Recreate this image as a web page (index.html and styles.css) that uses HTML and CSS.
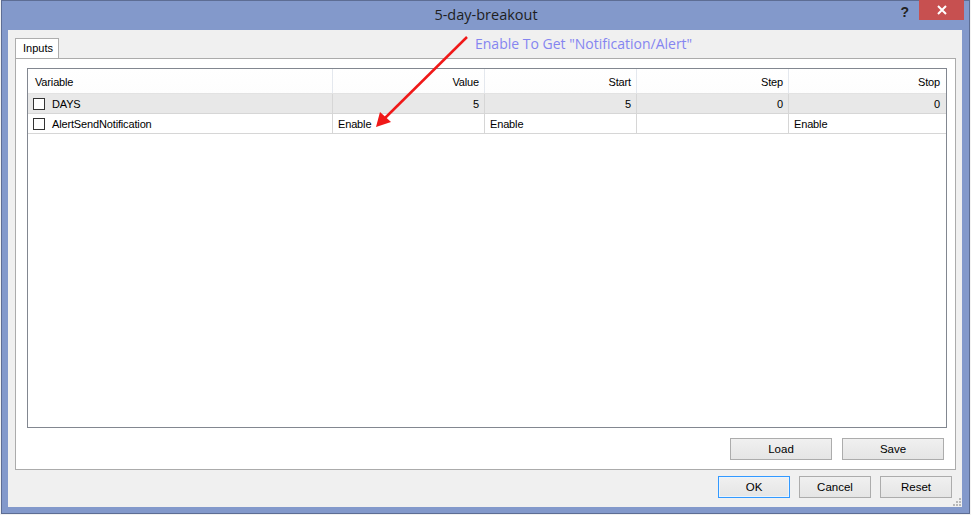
FILE: index.html
```html
<!DOCTYPE html>
<html>
<head>
<meta charset="utf-8">
<title>5-day-breakout</title>
<link rel="stylesheet" href="styles.css">
</head>
<body>
	<div class="window">
		<div class="titlebar">
			<span class="title">5-day-breakout</span>
			<div class="controls">
				<span class="help">?</span>
				<span class="close">
					<svg width="10" height="10" viewBox="0 0 10 10"><path d="M1 1L9 9M9 1L1 9" stroke="#fff" stroke-width="2"/></svg>
				</span>
			</div>
		</div>
		<div class="client">
			<div class="tabs">
				<div class="tab">Inputs</div>
			</div>
			<div class="panel">
				<div class="listview">
					<div class="row head">
						<div class="cell">Variable</div>
						<div class="cell num">Value</div>
						<div class="cell num">Start</div>
						<div class="cell num">Step</div>
						<div class="cell num">Stop</div>
					</div>
					<div class="row grey">
						<div class="cell"><span class="check"></span>DAYS</div>
						<div class="cell num">5</div>
						<div class="cell num">5</div>
						<div class="cell num">0</div>
						<div class="cell num">0</div>
					</div>
					<div class="row">
						<div class="cell"><span class="check"></span>AlertSendNotification</div>
						<div class="cell">Enable</div>
						<div class="cell">Enable</div>
						<div class="cell"></div>
						<div class="cell">Enable</div>
					</div>
				</div>
				<div class="panel-buttons">
					<button class="btn wide">Load</button>
					<button class="btn wide">Save</button>
				</div>
			</div>
			<div class="dialog-buttons">
				<button class="btn focus">OK</button>
				<button class="btn">Cancel</button>
				<button class="btn">Reset</button>
			</div>
			<svg class="grip" width="8" height="8" viewBox="0 0 8 8">
				<rect x="6" y="0" width="2" height="2" fill="#b8b8b8"/>
				<rect x="3" y="3" width="2" height="2" fill="#b8b8b8"/>
				<rect x="6" y="3" width="2" height="2" fill="#b8b8b8"/>
				<rect x="0" y="6" width="2" height="2" fill="#b8b8b8"/>
				<rect x="3" y="6" width="2" height="2" fill="#b8b8b8"/>
				<rect x="6" y="6" width="2" height="2" fill="#b8b8b8"/>
			</svg>
		</div>
	</div>

	<!-- annotation drawn on top of the screenshot -->
	<div class="note">Enable To Get "Notification/Alert"</div>
	<svg class="arrow" width="971" height="515" viewBox="0 0 971 515">
		<line x1="467" y1="37" x2="384" y2="119" stroke="#f01818" stroke-width="2.5"/>
		<path d="M376 127L380 112L391 122Z" fill="#f01818"/>
	</svg>
</body>
</html>
```

FILE: styles.css
```css
body {
	margin: 0;
	background: #f2f2f2;
	font-family: "Liberation Sans", Arial, sans-serif;
	font-size: 11px;
	color: #000;
	position: relative;
	width: 971px;
	height: 515px;
	overflow: hidden;
}

.window {
	margin-left: 1px;
	width: 969px;
	height: 514px;
	box-sizing: border-box;
	border: 1px solid #5d6d94;
	background: #8399cb;
	display: flex;
	flex-direction: column;
}

.titlebar {
	height: 29px;
	flex: none;
	display: flex;
	justify-content: center;
	position: relative;
}

.title {
	font-family: "Open Sans", sans-serif;
	font-size: 14.5px;
	color: #1e1e1e;
	line-height: 28px;
	margin-left: 1px;
}

.controls {
	position: absolute;
	right: 5px;
	top: -1px;
	display: flex;
	align-items: flex-start;
}

.help {
	font-family: "Liberation Sans", sans-serif;
	font-weight: bold;
	font-size: 14px;
	color: #222;
	margin-right: 10px;
	margin-top: 4px;
}

.close {
	width: 45px;
	height: 20px;
	background: #c75050;
	display: flex;
	align-items: center;
	justify-content: center;
}

.client {
	flex: 1;
	margin: 0 7px 6px 6px;
	background: #f0f0f0;
	padding: 8px 6px 0 7px;
	position: relative;
}

.tabs {
	display: flex;
	height: 20px;
}

.tab {
	width: 44px;
	height: 20px;
	box-sizing: border-box;
	border: 1px solid #adadad;
	border-bottom: none;
	background: #fff;
	padding: 3px 0 0 7px;
	position: relative;
	z-index: 1;
	margin-bottom: -1px;
}

.panel {
	height: 412px;
	box-sizing: border-box;
	border: 1px solid #ababab;
	background: #fff;
	padding: 9px 8px 9px 11px;
}

.listview {
	height: 360px;
	box-sizing: border-box;
	border: 1px solid #828790;
}

.row {
	display: grid;
	grid-template-columns: 305px 152px 152px 152px 156px;
	height: 20px;
	box-sizing: border-box;
	border-bottom: 1px solid #d6d6d6;
}

.row.head {
	height: 25px;
	border-bottom: 1px solid #e2e2e2;
	background: linear-gradient(#fff, #fdfdfd);
}

.row.grey {
	background: #e8e8e8;
}

.cell {
	border-right: 1px solid #d6d6d6;
	padding: 0 5px;
	display: flex;
	align-items: center;
	white-space: nowrap;
	letter-spacing: -0.15px;
}

.head .cell {
	border-right: 1px solid #e4e8ee;
	padding: 1px 5px 0 7px;
}

.cell:last-child {
	border-right: none;
}

.cell.num {
	justify-content: flex-end;
}

.check {
	width: 12px;
	height: 12px;
	box-sizing: border-box;
	border: 1px solid #333;
	background: #fff;
	margin-right: 7px;
}

.panel-buttons {
	display: flex;
	justify-content: flex-end;
	gap: 10px;
	margin-top: 10px;
	margin-right: 3px;
}

.dialog-buttons {
	display: flex;
	justify-content: flex-end;
	gap: 9px;
	margin-top: 6px;
	margin-right: 4px;
}

.btn {
	width: 72px;
	height: 22px;
	box-sizing: border-box;
	border: 1px solid #acacac;
	background: linear-gradient(#f0f0f0, #e5e5e5);
	font-family: "Liberation Sans", Arial, sans-serif;
	font-size: 11.5px;
	color: #000;
	padding: 0;
}

.btn.wide {
	width: 102px;
}

.btn.focus {
	border: 1px solid #3399ff;
	box-shadow: inset 0 0 0 1px #eaf4fd;
}

.grip {
	position: absolute;
	right: 1px;
	bottom: 1px;
}

.note {
	position: absolute;
	left: 475px;
	top: 34px;
	font-family: "Open Sans", sans-serif;
	font-size: 14px;
	color: #8585f0;
}

.arrow {
	position: absolute;
	left: 0;
	top: 0;
	pointer-events: none;
}
```
